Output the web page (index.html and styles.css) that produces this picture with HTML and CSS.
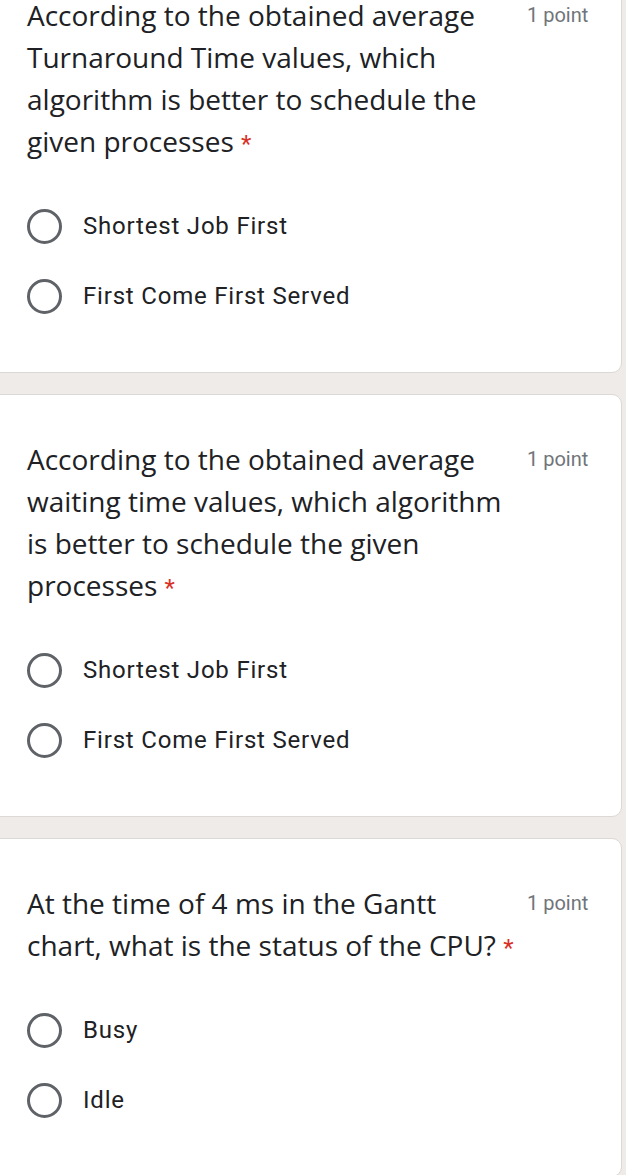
FILE: index.html
```html
<!DOCTYPE html>
<html>
<head>
<meta charset="utf-8">
<link rel="stylesheet" href="styles.css">
</head>
<body>
<div class="page">
  <section class="card card-first">
    <div class="head">
      <div class="question">According to the obtained average Turnaround Time values, which algorithm is better to schedule the given processes <span class="req">*</span></div>
      <div class="points">1 point</div>
    </div>
    <div class="options">
      <label class="option"><span class="radio"></span><span class="label">Shortest Job First</span></label>
      <label class="option"><span class="radio"></span><span class="label">First Come First Served</span></label>
    </div>
  </section>
  <section class="card">
    <div class="head">
      <div class="question">According to the obtained average waiting time values, which algorithm is better to schedule the given processes <span class="req">*</span></div>
      <div class="points">1 point</div>
    </div>
    <div class="options">
      <label class="option"><span class="radio"></span><span class="label">Shortest Job First</span></label>
      <label class="option"><span class="radio"></span><span class="label">First Come First Served</span></label>
    </div>
  </section>
  <section class="card">
    <div class="head">
      <div class="question">At the time of 4 ms in the Gantt chart, what is the status of the CPU? <span class="req">*</span></div>
      <div class="points">1 point</div>
    </div>
    <div class="options">
      <label class="option"><span class="radio"></span><span class="label">Busy</span></label>
      <label class="option"><span class="radio"></span><span class="label">Idle</span></label>
    </div>
  </section>
</div>
</body>
</html>
```
FILE: styles.css
```css
html, body {
  margin: 0;
  padding: 0;
  background: #efebe8;
}
body {
  font-family: Roboto, "Noto Sans", Arial, sans-serif;
  color: #202124;
  overflow: hidden;
}
.page {
  display: flex;
  flex-direction: column;
  gap: 21px;
}
.card {
  background: #ffffff;
  border: 1px solid #dcd8d5;
  border-radius: 10px;
  margin-left: -12px;
  margin-right: 4px;
  padding: 43px 0 41px 38px;
}
.card-first {
  margin-top: -60px;
  padding-top: 53px;
}
.head {
  display: flex;
  align-items: flex-start;
}
.question {
  width: 490px;
  flex: 0 0 490px;
  font-family: "Open Sans", Roboto, sans-serif;
  font-size: 28px;
  line-height: 42px;
  color: #202124;
}
.req {
  font-family: Roboto, sans-serif;
  font-size: 24px;
  line-height: 1;
  color: #d93025;
}
.points {
  margin-left: 10px;
  font-family: Roboto, sans-serif;
  font-size: 20px;
  line-height: 42px;
  color: #70757a;
  white-space: nowrap;
}
.options {
  display: flex;
  flex-direction: column;
  margin-top: 29px;
}
.option {
  display: flex;
  align-items: center;
  height: 70px;
  gap: 21px;
}
.radio {
  box-sizing: border-box;
  width: 35px;
  height: 35px;
  border: 3px solid #5f6368;
  border-radius: 50%;
  flex: 0 0 auto;
}
.label {
  font-size: 24px;
  letter-spacing: 0.8px;
  color: #202124;
}
```
